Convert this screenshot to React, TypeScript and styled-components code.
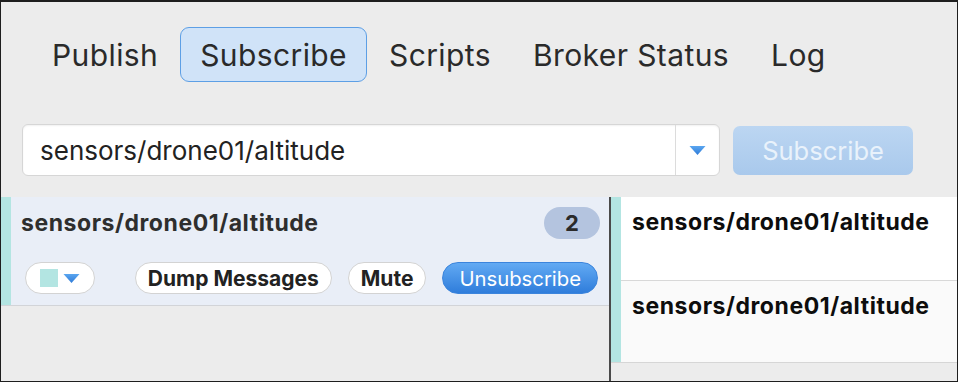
import React from 'react'
import styled, { createGlobalStyle } from 'styled-components'

const Global = createGlobalStyle`
html, body {
  margin: 0;
  padding: 0;
  background: #ececec;
}
* { box-sizing: border-box; }
`

const Window = styled.div`
width: 958px;
height: 382px;
border: 1px solid #1e1e1e;
border-top: 2px solid #1e1e1e;
background: #ececec;
display: flex;
flex-direction: column;
font-family: Inter, "Liberation Sans", sans-serif;
color: #2b2b2b;
overflow: hidden;
`

const TabBar = styled.div`
display: flex;
gap: 2px;
padding: 25px 0 0 31px;
`

const Tab = styled.div<{ active?: boolean }>`
height: 55px;
padding: 0 19px;
display: flex;
align-items: center;
font-size: 30px;
letter-spacing: 0.4px;
border-radius: 9px;
border: 1.5px solid ${(p) => (p.active ? '#5d9fe5' : 'transparent')};
background: ${(p) => (p.active ? '#d0e3f8' : 'transparent')};
color: #2a2a2a;
`

const SearchRow = styled.div`
display: flex;
align-items: center;
gap: 13px;
padding: 42px 0 0 21px;
`

const Combo = styled.div`
width: 698px;
height: 52px;
display: flex;
background: #fff;
border: 1px solid #d6d6d6;
border-radius: 6px;
box-shadow: inset 0 1px 2px rgba(0, 0, 0, 0.06);
`

const ComboText = styled.div`
flex: 1;
display: flex;
align-items: center;
padding-left: 17px;
font-size: 26px;
color: #222;
`

const ComboArrow = styled.div`
width: 44px;
border-left: 1px solid #dcdcdc;
display: flex;
align-items: center;
justify-content: center;
`

const SubscribeButton = styled.div`
width: 180px;
height: 49px;
border-radius: 7px;
background: linear-gradient(#bcd6f2, #a9c9ec);
color: #e9f2fb;
font-size: 25.5px;
display: flex;
align-items: center;
justify-content: center;
`

const Lower = styled.div`
flex: 1;
display: flex;
margin-top: 21px;
`

const LeftColumn = styled.div`
width: 608px;
`

const SubPanel = styled.div`
height: 109px;
display: flex;
background: #e9eef7;
border-bottom: 1px solid #d2d4d8;
`

const Accent = styled.div`
width: 10px;
background: #b3e5e2;
`

const SubBody = styled.div`
flex: 1;
padding: 10px 9px 0 10px;
display: flex;
flex-direction: column;
gap: 23px;
`

const SubHeader = styled.div`
height: 32px;
display: flex;
align-items: center;
justify-content: space-between;
`

const SubTitle = styled.div`
font-size: 23px;
letter-spacing: 0.55px;
font-weight: 700;
color: #2e2e2e;
`

const Badge = styled.div`
width: 56px;
height: 32px;
border-radius: 16px;
background: #b4c4df;
display: flex;
align-items: center;
justify-content: center;
font-size: 22px;
font-weight: 700;
color: #2a2a2a;
`

const SubActions = styled.div`
height: 32px;
display: flex;
align-items: center;
justify-content: space-between;
padding: 0 2px 0 4px;
`

const ButtonGroup = styled.div`
display: flex;
gap: 16px;
`

const Pill = styled.div<{ primary?: boolean }>`
height: 32px;
padding: 0 ${(p) => (p.primary ? '16px' : '12px')};
border-radius: 16px;
display: flex;
align-items: center;
font-size: ${(p) => (p.primary ? '20.3px' : '21px')};
font-weight: ${(p) => (p.primary ? 400 : 700)};
color: ${(p) => (p.primary ? '#fff' : '#222')};
background: ${(p) => (p.primary ? 'linear-gradient(#62aaf3, #2f7ddb)' : '#fff')};
border: 1px solid ${(p) => (p.primary ? '#3b84dc' : '#d3d3d3')};
`

const ColorPicker = styled.div`
width: 70px;
height: 32px;
border-radius: 16px;
background: #fff;
border: 1px solid #d3d3d3;
display: flex;
align-items: center;
justify-content: center;
gap: 5px;
`

const Swatch = styled.div`
width: 18px;
height: 18px;
background: #b3e5e2;
`

const Divider = styled.div`
width: 2px;
background: #4a4a4a;
`

const RightColumn = styled.div`
flex: 1;
display: flex;
flex-direction: column;
`

const Messages = styled.div`
display: flex;
height: 166px;
border-bottom: 1px solid #d6d6d6;
`

const MessageList = styled.div`
flex: 1;
display: flex;
flex-direction: column;
`

const Message = styled.div<{ alt?: boolean }>`
height: 83px;
padding: 11px 0 0 11px;
background: ${(p) => (p.alt ? '#fafafa' : '#fff')};
border-top: ${(p) => (p.alt ? '1px solid #d8d8d8' : 'none')};
font-size: 23px;
letter-spacing: 0.55px;
font-weight: 700;
color: #0d0d0d;
`

const Triangle = ({ w, h }: { w: number; h: number }) => (
  <svg width={w} height={h} viewBox="0 0 16 9">
    <defs>
      <linearGradient id="tri" x1="0" y1="0" x2="0" y2="1">
        <stop offset="0" stopColor="#5aa6f0" />
        <stop offset="1" stopColor="#2f7bd8" />
      </linearGradient>
    </defs>
    <path d="M0 0 H16 L8 9 Z" fill="url(#tri)" />
  </svg>
)

const topic = 'sensors/drone01/altitude'

const App = () => {
  return (
    <Window>
      <Global />
      <TabBar>
        <Tab>Publish</Tab>
        <Tab active>Subscribe</Tab>
        <Tab>Scripts</Tab>
        <Tab>Broker Status</Tab>
        <Tab>Log</Tab>
      </TabBar>
      <SearchRow>
        <Combo>
          <ComboText>{topic}</ComboText>
          <ComboArrow>
            <Triangle w={17} h={9} />
          </ComboArrow>
        </Combo>
        <SubscribeButton>Subscribe</SubscribeButton>
      </SearchRow>
      <Lower>
        <LeftColumn>
          <SubPanel>
            <Accent />
            <SubBody>
              <SubHeader>
                <SubTitle>{topic}</SubTitle>
                <Badge>2</Badge>
              </SubHeader>
              <SubActions>
                <ColorPicker>
                  <Swatch />
                  <Triangle w={17} h={9} />
                </ColorPicker>
                <ButtonGroup>
                  <Pill>Dump Messages</Pill>
                  <Pill>Mute</Pill>
                  <Pill primary>Unsubscribe</Pill>
                </ButtonGroup>
              </SubActions>
            </SubBody>
          </SubPanel>
        </LeftColumn>
        <Divider />
        <RightColumn>
          <Messages>
            <Accent />
            <MessageList>
              <Message>{topic}</Message>
              <Message alt>{topic}</Message>
            </MessageList>
          </Messages>
        </RightColumn>
      </Lower>
    </Window>
  )
}

export default App
